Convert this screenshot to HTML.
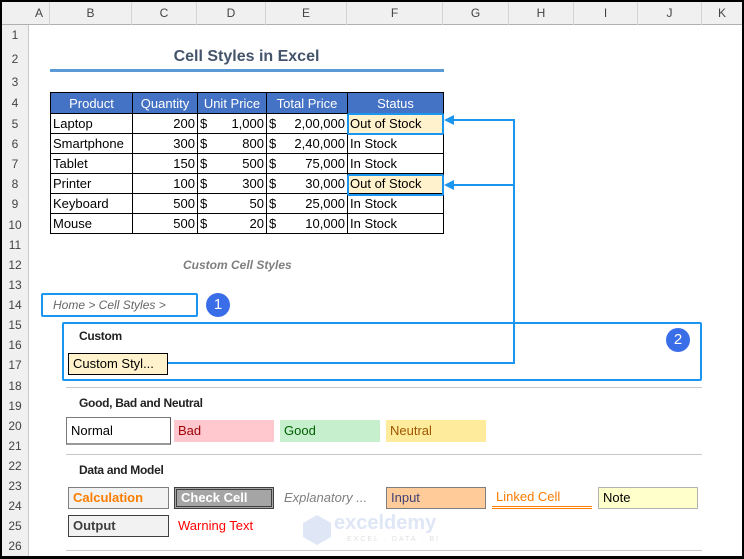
<!DOCTYPE html>
<html><head><meta charset="utf-8"><style>
*{margin:0;padding:0;box-sizing:border-box}
body{width:744px;height:559px;background:#000;position:relative;overflow:hidden;font-family:"Liberation Sans",sans-serif}
#s{position:absolute;left:2px;top:2px;width:740px;height:554px;background:#fff;overflow:hidden}
.a{position:absolute}
.ch{position:absolute;top:0;height:23px;line-height:23px;text-align:center;font-size:12px;color:#444;border-right:1px solid #d4d4d4}
.rh{position:absolute;left:0;width:26px;text-align:center;font-size:12px;color:#444;height:20px;line-height:20px}
table{border-collapse:collapse;position:absolute;left:48px;top:90px;font-size:13px;table-layout:fixed}
td{border:1px solid #000;padding:0 2px;height:20px;white-space:nowrap;color:#000}
th{background:#4472c4;color:#fff;font-weight:normal;border:1px solid #000;height:21px;font-size:13px}
.r{text-align:right}
.st{position:absolute;height:22px;line-height:22px;font-size:13px;padding-left:4px;white-space:nowrap}
.h{position:absolute;font-size:12px;font-weight:bold;color:#222;letter-spacing:-0.3px}
.sep{position:absolute;left:64px;width:636px;height:1px;background:#c8c8c8}
.bl{position:absolute;background:#1a95f0}
.circ{position:absolute;width:24px;height:24px;border-radius:50%;background:#3a6ee8;color:#fff;font-size:15px;text-align:center;line-height:24px}
</style></head><body><div id="s">
<div class="a" style="left:0;top:0;width:740px;height:23px;background:#f0f0f0;border-bottom:1px solid #b0b0b0"></div>
<div class="a" style="left:0;top:23px;width:27px;height:531px;background:#f0f0f0;border-right:1px solid #c8c8c8"></div>
<div class="ch" style="left:27px;width:21px">A</div>
<div class="ch" style="left:48px;width:82px">B</div>
<div class="ch" style="left:130px;width:65px">C</div>
<div class="ch" style="left:195px;width:69px">D</div>
<div class="ch" style="left:264px;width:81px">E</div>
<div class="ch" style="left:345px;width:96px">F</div>
<div class="ch" style="left:441px;width:66px">G</div>
<div class="ch" style="left:507px;width:65px">H</div>
<div class="ch" style="left:572px;width:64px">I</div>
<div class="ch" style="left:636px;width:64px">J</div>
<div class="ch" style="left:700px;width:40px;border:0">K</div>
<div class="rh" style="top:23px">1</div><div class="rh" style="top:47px">2</div><div class="rh" style="top:70px">3</div><div class="rh" style="top:91px">4</div>
<div class="rh" style="top:112px">5</div><div class="rh" style="top:132px">6</div><div class="rh" style="top:152px">7</div><div class="rh" style="top:172px">8</div>
<div class="rh" style="top:192px">9</div><div class="rh" style="top:213px">10</div><div class="rh" style="top:233px">11</div><div class="rh" style="top:253px">12</div>
<div class="rh" style="top:273px">13</div><div class="rh" style="top:293px">14</div><div class="rh" style="top:313px">15</div><div class="rh" style="top:333px">16</div>
<div class="rh" style="top:353px">17</div><div class="rh" style="top:374px">18</div><div class="rh" style="top:394px">19</div><div class="rh" style="top:414px">20</div>
<div class="rh" style="top:434px">21</div><div class="rh" style="top:454px">22</div><div class="rh" style="top:474px">23</div><div class="rh" style="top:494px">24</div>
<div class="rh" style="top:514px">25</div><div class="rh" style="top:534px">26</div>

<div class="a" style="left:48px;width:393px;top:46px;text-align:center;font-size:16px;font-weight:bold;color:#44546a">Cell Styles in Excel</div>
<div class="a" style="left:48px;width:394px;top:67px;height:3px;background:#5b9bd5"></div>

<table>
<colgroup><col style="width:82px"><col style="width:65px"><col style="width:69px"><col style="width:81px"><col style="width:96px"></colgroup>
<tr><th>Product</th><th>Quantity</th><th>Unit Price</th><th>Total Price</th><th>Status</th></tr>
<tr><td>Laptop</td><td class="r">200</td><td>$<span style="float:right">1,000</span></td><td>$<span style="float:right">2,00,000</span></td><td style="background:#fff2cc">Out of Stock</td></tr>
<tr><td>Smartphone</td><td class="r">300</td><td>$<span style="float:right">800</span></td><td>$<span style="float:right">2,40,000</span></td><td>In Stock</td></tr>
<tr><td>Tablet</td><td class="r">150</td><td>$<span style="float:right">500</span></td><td>$<span style="float:right">75,000</span></td><td>In Stock</td></tr>
<tr><td>Printer</td><td class="r">100</td><td>$<span style="float:right">300</span></td><td>$<span style="float:right">30,000</span></td><td style="background:#fff2cc">Out of Stock</td></tr>
<tr><td>Keyboard</td><td class="r">500</td><td>$<span style="float:right">50</span></td><td>$<span style="float:right">25,000</span></td><td>In Stock</td></tr>
<tr><td>Mouse</td><td class="r">500</td><td>$<span style="float:right">20</span></td><td>$<span style="float:right">10,000</span></td><td>In Stock</td></tr>
</table>
<div class="a" style="left:345px;top:111px;width:97px;height:22px;border:2px solid #1a95f0;border-radius:2px"></div>
<div class="a" style="left:345px;top:172px;width:97px;height:22px;border:2px solid #1a95f0;border-radius:2px"></div>

<div class="bl" style="left:446px;top:117px;width:66px;height:2px"></div>
<div class="bl" style="left:446px;top:182px;width:66px;height:2px"></div>
<div class="bl" style="left:511px;top:117px;width:2px;height:245px"></div>
<div class="bl" style="left:166px;top:360px;width:347px;height:2px"></div>
<svg class="a" style="left:441px;top:112px" width="12" height="12"><path d="M1 6 L11 1 L11 11Z" fill="#1a95f0"/></svg>
<svg class="a" style="left:441px;top:177px" width="12" height="12"><path d="M1 6 L11 1 L11 11Z" fill="#1a95f0"/></svg>

<div class="a" style="left:181px;top:256px;font-size:12px;font-style:italic;font-weight:bold;color:#7f7f7f">Custom Cell Styles</div>

<div class="a" style="left:39px;top:291px;width:157px;height:24px;border:2px solid #1a95f0;border-radius:2px;font-size:12px;font-style:italic;color:#666;padding-left:10px;line-height:20px">Home &gt; Cell Styles &gt;</div>
<div class="circ" style="left:204px;top:291px">1</div>
<div class="a" style="left:60px;top:320px;width:640px;height:59px;border:2px solid #1a95f0;border-radius:2px"></div>
<div class="circ" style="left:664px;top:326px">2</div>
<div class="h" style="left:77px;top:327px">Custom</div>
<div class="st" style="left:66px;top:351px;width:100px;background:#fff2cc;border:1px solid #000;line-height:20px">Custom Styl...</div>

<div class="sep" style="top:385px"></div>
<div class="h" style="left:77px;top:394px">Good, Bad and Neutral</div>
<div class="st" style="left:64px;top:415px;width:105px;height:28px;line-height:26px;border:1px solid #7a7a7a;border-right-color:#555;border-bottom:2px solid #999">Normal</div>
<div class="st" style="left:172px;top:418px;width:100px;background:#ffc7ce;color:#9c0006">Bad</div>
<div class="st" style="left:278px;top:418px;width:100px;background:#c6efce;color:#006100">Good</div>
<div class="st" style="left:384px;top:418px;width:100px;background:#ffeb9c;color:#9c5700">Neutral</div>

<div class="sep" style="top:452px"></div>
<div class="h" style="left:77px;top:461px">Data and Model</div>
<div class="st" style="left:66px;top:485px;width:101px;background:#f2f2f2;border:1px solid #7f7f7f;color:#fa7d00;font-weight:bold;line-height:20px">Calculation</div>
<div class="st" style="left:172px;top:485px;width:100px;background:#a5a5a5;border:3px double #3f3f3f;color:#fff;font-weight:bold;line-height:16px">Check Cell</div>
<div class="st" style="left:278px;top:485px;width:100px;color:#7f7f7f;font-style:italic">Explanatory ...</div>
<div class="st" style="left:384px;top:485px;width:100px;background:#ffcc99;border:1px solid #7f7f7f;color:#3f3f76;line-height:20px">Input</div>
<div class="st" style="left:490px;top:485px;width:100px;color:#fa7d00;border-bottom:3px double #ff8001;line-height:20px">Linked Cell</div>
<div class="st" style="left:596px;top:485px;width:100px;background:#ffffcc;border:1px solid #b2b2b2;line-height:20px">Note</div>
<div class="st" style="left:66px;top:513px;width:101px;background:#f2f2f2;border:1px solid #3f3f3f;color:#3f3f3f;font-weight:bold;line-height:20px">Output</div>
<div class="st" style="left:172px;top:513px;width:100px;color:#ff0000">Warning Text</div>
<svg class="a" style="left:300px;top:512px" width="30" height="32"><path d="M15 1 L29 9 L29 23 L15 31 L1 23 L1 9Z" fill="#dfe6f5"/></svg>
<div class="a" style="left:332px;top:510px;font-size:20px;font-weight:bold;color:#dfe6f5">exceldemy</div>
<div class="a" style="left:345px;top:534px;font-size:7px;color:#e0e0e0;letter-spacing:2px">EXCEL · DATA · BI</div>
<div class="sep" style="top:548px"></div>
</div></body></html>
